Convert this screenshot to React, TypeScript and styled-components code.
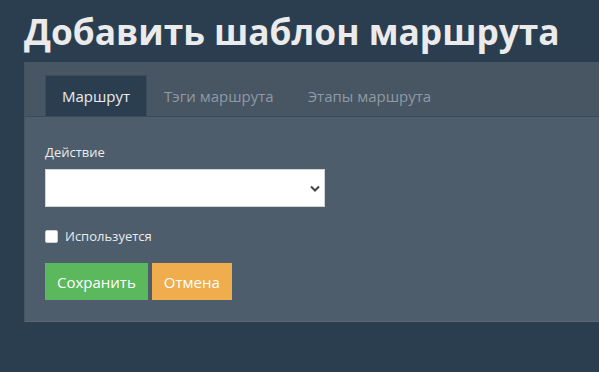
import React from "react";
import styled, { createGlobalStyle } from "styled-components";

const GlobalStyle = createGlobalStyle`
  html, body {
    margin: 0;
    padding: 0;
    background: #2b3e50;
    font-family: "Open Sans", "Noto Sans", sans-serif;
    color: #ebebeb;
  }
`;

const Page = styled.div`
  padding: 0 0 0 24px;
  min-height: 372px;
  overflow: hidden;
`;

const Title = styled.h1`
  margin: 0;
  padding-top: 8px;
  height: 54px;
  font-size: 35.3px;
  line-height: 46px;
  font-weight: 700;
  color: #ebebeb;
  white-space: nowrap;
`;

const Panel = styled.div`
  background: #4e5d6c;
  border-left: 1px solid #45525f;
  border-bottom: 1px solid #5a6876;
  width: 600px;
`;

const TabBar = styled.div`
  display: flex;
  background: #485563;
  padding: 13px 0 0 20px;
  border-bottom: 1px solid #3d4a57;
`;

const Tab = styled.div<{ $active?: boolean }>`
  padding: 0 16px;
  height: 40px;
  line-height: 40px;
  font-size: 15px;
  color: ${(p) => (p.$active ? "#ebebeb" : "#8e9aa6")};
  background: ${(p) => (p.$active ? "#2b3e50" : "transparent")};
  border: 1px solid ${(p) => (p.$active ? "#3d4c5b" : "transparent")};
  border-bottom: none;
`;

const Body = styled.div`
  padding: 26px 20px 21px;
`;

const Label = styled.div`
  font-size: 13px;
  line-height: 18px;
  margin-bottom: 8px;
`;

const SelectBox = styled.div`
  width: 274px;
  height: 36px;
  background: #fff;
  border: 1px solid #cfd4d9;
  display: flex;
  align-items: center;
  justify-content: flex-end;
  padding-right: 4px;
  box-sizing: content-box;
`;

const CheckRow = styled.label`
  display: flex;
  align-items: center;
  gap: 7px;
  margin-top: 20px;
  font-size: 13px;
  line-height: 18px;
`;

const Box = styled.span`
  width: 11px;
  height: 11px;
  background: #fff;
  border: 1px solid #d0d0d0;
  border-radius: 2px;
`;

const Actions = styled.div`
  display: flex;
  gap: 4px;
  margin-top: 18px;
`;

const Button = styled.button<{ $color: string }>`
  border: none;
  margin: 0;
  height: 37px;
  padding: 0 12px;
  background: ${(p) => p.$color};
  color: #fff;
  font-family: "Open Sans", "Noto Sans", sans-serif;
  font-size: 15px;
`;

export default function App() {
  return (
    <>
      <GlobalStyle />
      <Page>
        <Title>Добавить шаблон маршрута</Title>
        <Panel>
          <TabBar>
            <Tab $active>Маршрут</Tab>
            <Tab>Тэги маршрута</Tab>
            <Tab>Этапы маршрута</Tab>
          </TabBar>
          <Body>
            <Label>Действие</Label>
            <SelectBox>
              <svg width="10" height="7" viewBox="0 0 10 7">
                <path d="M1 1.5 L5 5.5 L9 1.5" fill="none" stroke="#444" strokeWidth="2" />
              </svg>
            </SelectBox>
            <CheckRow>
              <Box />
              Используется
            </CheckRow>
            <Actions>
              <Button $color="#5cb85c">Сохранить</Button>
              <Button $color="#f0ad4e">Отмена</Button>
            </Actions>
          </Body>
        </Panel>
      </Page>
    </>
  );
}
